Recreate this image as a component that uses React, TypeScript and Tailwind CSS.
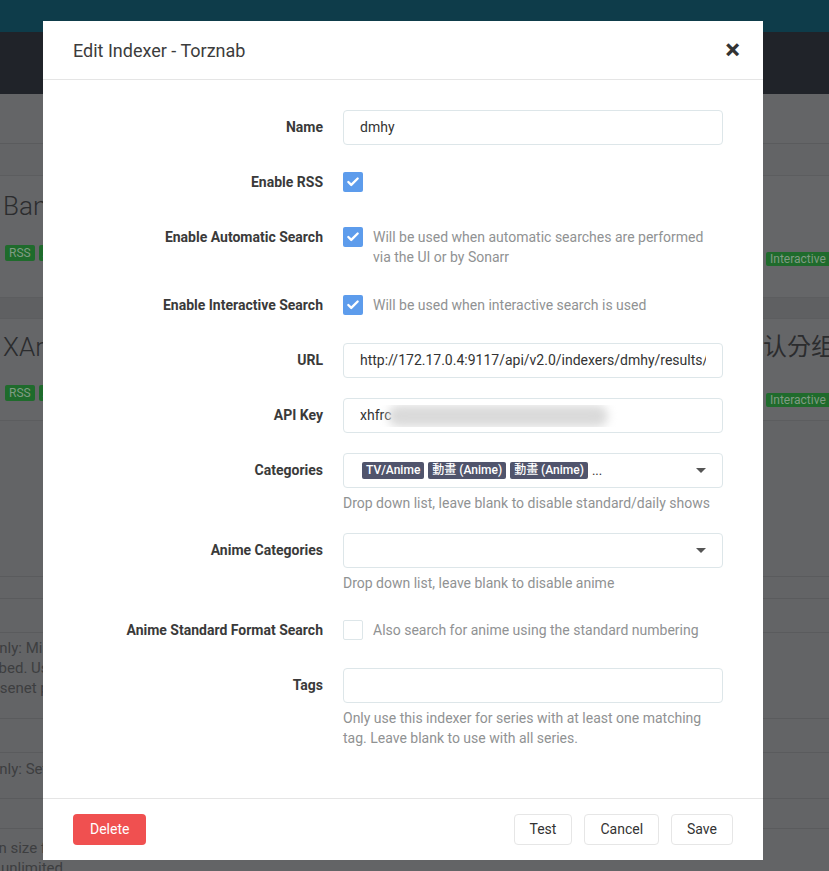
import { Check } from 'lucide-react';

const font = { fontFamily: 'Roboto, "Noto Sans CJK TC", "Noto Sans", sans-serif' };

function Row({ label, children }: { label: string; children: React.ReactNode }) {
  return (
    <div className="flex items-start mb-[20px]">
      <div className="w-[270px] shrink-0 h-[35px] pr-[20px] flex items-center justify-end text-[14px] font-bold text-[#3a3a3a]">
        {label}
      </div>
      <div className="w-[380px]">{children}</div>
    </div>
  );
}

function Box({ checked }: { checked: boolean }) {
  return checked ? (
    <div className="w-[20px] h-[20px] shrink-0 rounded-[2px] bg-[#5d9cec] flex items-center justify-center">
      <Check className="w-[14px] h-[14px] text-white" strokeWidth={4} />
    </div>
  ) : (
    <div className="w-[20px] h-[20px] shrink-0 rounded-[2px] border border-[#dde6e9] bg-white" />
  );
}

function CheckRow({ label, checked, help }: { label: string; checked: boolean; help?: string }) {
  return (
    <Row label={label}>
      <div className="min-h-[35px] pt-[7px] pb-[1px] flex items-start gap-[10px]">
        <Box checked={checked} />
        {help && <div className="text-[14px] leading-[20px] text-[#909293]">{help}</div>}
      </div>
    </Row>
  );
}

function Help({ children }: { children: React.ReactNode }) {
  return <div className="mt-[5px] text-[14px] leading-[20px] text-[#909293]">{children}</div>;
}

function Input({ children }: { children?: React.ReactNode }) {
  return (
    <div className="h-[35px] border border-[#dde6e9] rounded-[4px] px-[16px] flex items-center text-[14px] text-[#333]">
      <div className="flex-1 flex items-center overflow-hidden whitespace-nowrap">{children}</div>
    </div>
  );
}

function Select({ children }: { children?: React.ReactNode }) {
  return (
    <div className="h-[35px] border border-[#dde6e9] rounded-[4px] pl-[18px] pr-[16px] flex items-center text-[14px] text-[#333]">
      <div className="flex-1 flex items-center gap-[4px] whitespace-nowrap overflow-hidden">{children}</div>
      <div className="w-0 h-0 border-l-[5px] border-r-[5px] border-t-[5px] border-l-transparent border-r-transparent border-t-[#555]" />
    </div>
  );
}

function Tag({ children }: { children: React.ReactNode }) {
  return (
    <span className="bg-[#50546c] text-white text-[12px] font-medium leading-[17px] px-[4px] rounded-[2px]">
      {children}
    </span>
  );
}

function Badge({ children }: { children: React.ReactNode }) {
  return (
    <span className="bg-[#1f6b2c] text-[#7f9b83] text-[12px] leading-[16px] px-[4px] rounded-[2px] whitespace-nowrap">
      {children}
    </span>
  );
}

function BtnLight({ children }: { children: React.ReactNode }) {
  return (
    <button className="h-[31px] px-[15px] border border-[#e6e6e6] rounded-[4px] bg-white text-[14px] text-[#333]">
      {children}
    </button>
  );
}

export default function App() {
  return (
    <div className="relative h-[871px] w-full overflow-hidden bg-[#636466]" style={font}>
      {/* Page behind the dimmed overlay */}
      <div className="h-[32px] bg-[#0e3c4a]" />
      <div className="h-[62px] bg-[#202329]" />
      <div className="h-[50px] border-b border-[#5a5b5d] bg-[#646567]" />
      <div className="h-[31px]" />

      <div className="h-[123px] bg-[#656668] border-y border-[#5c5d5f] flex overflow-hidden">
        <div className="w-[739px] shrink-0 pl-[3px] pt-[12px]">
          <div className="text-[26px] font-light text-[#2b2c2e] leading-[36px]">Bangumi Moe</div>
          <div className="flex gap-[4px] mt-[21px] pl-[2px]">
            <Badge>RSS</Badge>
            <Badge>Automatic Search</Badge>
          </div>
        </div>
        <div className="pt-[70px] pl-[27px]">
          <Badge>Interactive Search</Badge>
        </div>
      </div>

      <div className="h-[20px] bg-[#5f6062]" />

      <div className="h-[103px] bg-[#656668] border-y border-[#5c5d5f] flex overflow-hidden">
        <div className="w-[739px] shrink-0 pl-[3px] pt-[10px]">
          <div className="text-[26px] font-light text-[#2b2c2e] leading-[36px]">XArt</div>
          <div className="flex gap-[4px] mt-[20px] pl-[2px]">
            <Badge>RSS</Badge>
            <Badge>Automatic Search</Badge>
          </div>
        </div>
        <div className="flex-1 flex flex-col">
          <div className="pt-[10px] text-[24px] text-[#2b2c2e] leading-[36px] whitespace-nowrap">默认分组设置</div>
          <div className="mt-[22px] pl-[27px]">
            <Badge>Interactive Search</Badge>
          </div>
        </div>
      </div>

      <div className="h-[155px]" />
      <div className="h-[22px] border-t border-[#5a5b5d]" />
      <div className="h-[34px] border-t border-[#5a5b5d]" />
      <div className="h-[86px] border-t border-[#5a5b5d] pt-[5px] text-[15px] leading-[20px] text-[#3d3e40] whitespace-nowrap">
        <div className="-ml-[11px]">Only: Minimum</div>
        <div className="-ml-[33px]">Grabbed. Use</div>
        <div className="-ml-[10px]">Usenet p</div>
      </div>
      <div className="h-[34px] border-t border-[#5a5b5d]" />
      <div className="h-[46px] border-t border-[#5a5b5d] pt-[5px] text-[15px] text-[#3d3e40] whitespace-nowrap">
        <div className="-ml-[11px]">Only: Set</div>
      </div>
      <div className="h-[30px] border-t border-[#5a5b5d]" />
      <div className="border-t border-[#5a5b5d] pt-[9px] text-[15px] leading-[20px] text-[#3d3e40] whitespace-nowrap">
        <div className="-ml-[57px]">Retention size for</div>
        <div className="ml-[1px]">unlimited</div>
      </div>

      {/* Modal */}
      <div className="absolute left-[43px] top-[21px] w-[720px] bg-white">
        <div className="h-[59px] pl-[30px] pr-[23px] flex items-center justify-between border-b border-[#e5e5e5]">
          <div className="text-[18px] text-[#3c3c3c]">Edit Indexer - Torznab</div>
          <div className="text-[28px] font-bold text-[#333] leading-none">×</div>
        </div>

        <div className="px-[30px] pt-[30px] pb-[30px]">
          <Row label="Name">
            <Input>dmhy</Input>
          </Row>
          <CheckRow label="Enable RSS" checked />
          <CheckRow
            label="Enable Automatic Search"
            checked
            help="Will be used when automatic searches are performed via the UI or by Sonarr"
          />
          <CheckRow label="Enable Interactive Search" checked help="Will be used when interactive search is used" />
          <Row label="URL">
            <Input>http://172.17.0.4:9117/api/v2.0/indexers/dmhy/results/torznab/</Input>
          </Row>
          <Row label="API Key">
            <Input>
              <span>xhfrc</span>
              <span className="-ml-[3px] w-[220px] h-[22px] shrink-0 rounded-full bg-[#dadada] blur-[5px]" />
            </Input>
          </Row>
          <Row label="Categories">
            <Select>
              <Tag>TV/Anime</Tag>
              <Tag>動畫 (Anime)</Tag>
              <Tag>動畫 (Anime)</Tag>
              <span className="text-[13px]">...</span>
            </Select>
            <Help>Drop down list, leave blank to disable standard/daily shows</Help>
          </Row>
          <Row label="Anime Categories">
            <Select />
            <Help>Drop down list, leave blank to disable anime</Help>
          </Row>
          <CheckRow
            label="Anime Standard Format Search"
            checked={false}
            help="Also search for anime using the standard numbering"
          />
          <Row label="Tags">
            <Input />
            <Help>Only use this indexer for series with at least one matching tag. Leave blank to use with all series.</Help>
          </Row>
        </div>

        <div className="border-t border-[#e5e5e5] px-[30px] py-[15px] flex items-center justify-between">
          <button className="h-[31px] px-[17px] rounded-[4px] bg-[#f05050] text-[14px] text-white">Delete</button>
          <div className="flex gap-[12px]">
            <BtnLight>Test</BtnLight>
            <BtnLight>Cancel</BtnLight>
            <BtnLight>Save</BtnLight>
          </div>
        </div>
      </div>
    </div>
  );
}
